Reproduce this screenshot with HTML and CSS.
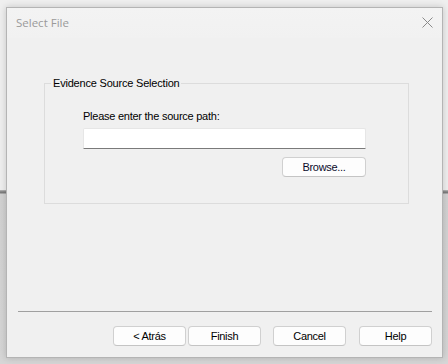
FILE: index.html
```html
<!DOCTYPE html>
<html>
<head>
<meta charset="utf-8">
<link rel="stylesheet" href="styles.css">
</head>
<body>
<div class="dialog">
  <div class="titlebar">
    <span class="title">Select File</span>
    <svg class="close" width="11" height="11" viewBox="0 0 11 11"><path d="M0.5 0.5 L10.5 10.5 M10.5 0.5 L0.5 10.5" stroke="#8a8a8a" stroke-width="1" fill="none"/></svg>
  </div>
  <div class="content">
    <div class="group">
      <span class="legend">Evidence Source Selection</span>
      <div class="group-body">
        <div class="label">Please enter the source path:</div>
        <div class="input"></div>
        <div class="browse-row"><button class="btn browse">Browse...</button></div>
      </div>
    </div>
  </div>
  <div class="footer">
    <div class="sep"></div>
    <div class="buttons">
      <button class="btn">&lt; Atrás</button>
      <button class="btn finish">Finish</button>
      <button class="btn cancel">Cancel</button>
      <button class="btn help">Help</button>
    </div>
  </div>
</div>
</body>
</html>
```
FILE: styles.css
```css
html, body {
  margin: 0;
  padding: 0;
}
body {
  width: 448px;
  height: 364px;
  overflow: hidden;
  background: linear-gradient(to bottom, #efefef 0, #efefef 190px, #bdbdbd 190px, #7d7d7d 192px, #7d7d7d 193px, #d2d2d2 194px, #d6d6d6 100%);
  font-family: "Liberation Sans", Arial, sans-serif;
  font-size: 11px;
  color: #000;
  padding: 7px 0 0 6px;
  box-sizing: border-box;
}
.dialog {
  width: 437px;
  height: 351px;
  box-sizing: border-box;
  border: 1px solid #b4b4b4;
  background: #f0f0f0;
  box-shadow: 0 0 7px rgba(0, 0, 0, 0.18);
  display: flex;
  flex-direction: column;
}
.titlebar {
  height: 30px;
  flex: none;
  display: flex;
  align-items: center;
  justify-content: space-between;
  padding: 0 9px 0 9px;
  background: linear-gradient(to bottom, #f3f3f3, #f1f1f1);
}
.title {
  font-family: "Open Sans", "Noto Sans", sans-serif;
  font-size: 11.5px;
  color: #9a9a9a;
  margin-top: -1px;
}
.close {
  display: block;
  margin-top: -1px;
}
.content {
  flex: 1;
  padding: 45px 0 0 37px;
}
.group {
  position: relative;
  width: 365px;
  height: 121px;
  box-sizing: border-box;
  border: 1px solid #dcdcdc;
}
.legend {
  position: absolute;
  left: 6px;
  top: -8px;
  padding: 0 2px;
  background: #f0f0f0;
  line-height: 14px;
  letter-spacing: -0.2px;
}
.group-body {
  padding: 25px 0 0 38px;
  width: 283px;
}
.label {
  line-height: 14px;
  letter-spacing: -0.25px;
}
.input {
  margin-top: 5px;
  height: 21px;
  box-sizing: border-box;
  background: #fff;
  border: 1px solid #e6e6e6;
  border-bottom: 1px solid #7a7a7a;
  border-radius: 2px 2px 0 0;
}
.browse-row {
  display: flex;
  justify-content: flex-end;
  margin-top: 8px;
}
.btn {
  font-family: "Liberation Sans", Arial, sans-serif;
  font-size: 11px;
  letter-spacing: -0.3px;
  color: #000;
  width: 73px;
  height: 20px;
  box-sizing: border-box;
  background: #fdfdfd;
  border: 1px solid #d0d0d0;
  border-bottom-color: #c4c4c4;
  border-radius: 4px;
  padding: 0;
  margin: 0;
  line-height: 18px;
}
.browse {
  width: 84px;
  color: #0a0a2a;
}
.footer {
  flex: none;
  padding: 0 10px 11px 11px;
}
.sep {
  height: 1px;
  background: #a0a0a0;
}
.buttons {
  display: flex;
  justify-content: flex-end;
  margin-top: 14px;
}
.finish { margin-left: 2px; }
.cancel { margin-left: 12px; }
.help { margin-left: 13px; }
```
